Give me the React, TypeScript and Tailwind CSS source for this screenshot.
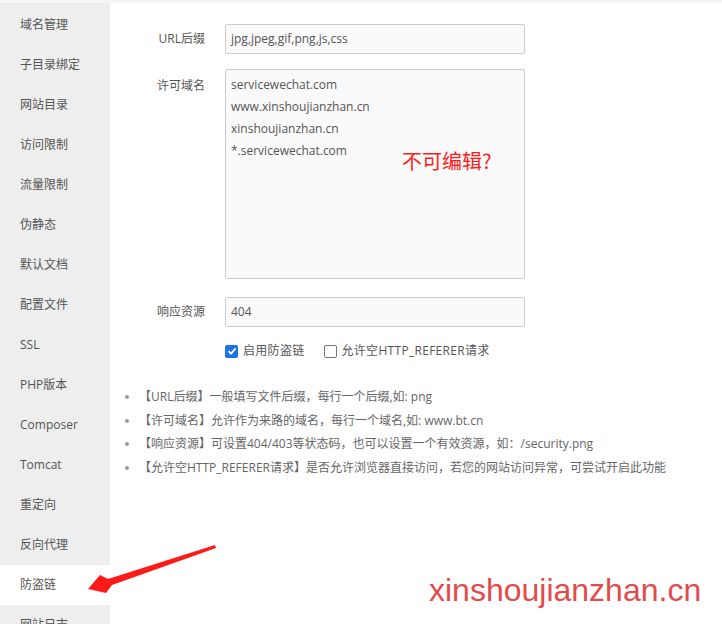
import React from "react";

const menu = [
  "域名管理",
  "子目录绑定",
  "网站目录",
  "访问限制",
  "流量限制",
  "伪静态",
  "默认文档",
  "配置文件",
  "SSL",
  "PHP版本",
  "Composer",
  "Tomcat",
  "重定向",
  "反向代理",
  "防盗链",
  "网站日志",
];

const tips = [
  "【URL后缀】一般填写文件后缀，每行一个后缀,如: png",
  "【许可域名】允许作为来路的域名，每行一个域名,如: www.bt.cn",
  "【响应资源】可设置404/403等状态码，也可以设置一个有效资源，如：/security.png",
  "【允许空HTTP_REFERER请求】是否允许浏览器直接访问，若您的网站访问异常，可尝试开启此功能",
];

const font = { fontFamily: '"Open Sans", "Noto Sans CJK SC", sans-serif' };

export default function App() {
  return (
    <div
      className="relative w-[722px] h-[624px] overflow-hidden bg-white text-[#555]"
      style={font}
    >
      <div className="h-[3px] bg-[#f5f5f5]" />
      <div className="flex h-[621px]">
        <div className="w-[110px] shrink-0 bg-[#eeeeee] pt-[2px]">
          {menu.map((m) => (
            <div
              key={m}
              className={`h-[40px] flex items-center pl-[20px] text-[12px] text-[#555] ${
                m === "防盗链" ? "bg-white" : ""
              }`}
            >
              {m}
            </div>
          ))}
        </div>
        <div className="flex-1 pt-[21px]">
          <div className="flex items-center">
            <div className="w-[95px] text-right text-[12px] mr-[20px]">URL后缀</div>
            <div className="w-[300px] h-[30px] border border-[#cccccc] rounded-[2px] bg-[#fafafa] flex items-center px-[5px] text-[12px]">
              jpg,jpeg,gif,png,js,css
            </div>
          </div>
          <div className="flex items-start mt-[15px]">
            <div className="w-[95px] text-right text-[12px] mr-[20px] mt-[6px] leading-[22px]">
              许可域名
            </div>
            <div className="w-[300px] h-[210px] border border-[#cccccc] rounded-[2px] bg-[#fafafa] px-[5px] pt-[4px] text-[12px] leading-[22px]">
              <div>servicewechat.com</div>
              <div>www.xinshoujianzhan.cn</div>
              <div>xinshoujianzhan.cn</div>
              <div>*.servicewechat.com</div>
            </div>
          </div>
          <div className="flex items-center mt-[18px]">
            <div className="w-[95px] text-right text-[12px] mr-[20px]">响应资源</div>
            <div className="w-[300px] h-[30px] border border-[#cccccc] rounded-[2px] bg-[#fafafa] flex items-center px-[5px] text-[12px]">
              404
            </div>
          </div>
          <div className="flex items-center mt-[14px] ml-[115px] h-[20px] text-[12px]">
            <span className="w-[13px] h-[13px] rounded-[2px] bg-[#1a73e8] flex items-center justify-center">
              <svg width="10" height="10" viewBox="0 0 10 10">
                <path d="M1.5 5.2 L4 7.6 L8.6 2.4" fill="none" stroke="white" strokeWidth="1.8" />
              </svg>
            </span>
            <span className="ml-[5px] tracking-[0.3px]">启用防盗链</span>
            <span className="ml-[19px] w-[13px] h-[13px] rounded-[2px] border border-[#767676] bg-white" />
            <span className="ml-[5px] tracking-[0.3px]">允许空HTTP_REFERER请求</span>
          </div>
          <ul className="mt-[24px] text-[12px] text-[#666] leading-[23.7px]">
            {tips.map((t) => (
              <li key={t} className="flex items-center">
                <span className="ml-[15px] w-[4px] h-[4px] rounded-full bg-[#999]" />
                <span className="ml-[10px]">{t}</span>
              </li>
            ))}
          </ul>
        </div>
      </div>

      <div
        className="absolute left-[402px] top-[147px] text-[20px] leading-[28px] text-[#ff1a1a]"
        style={{ fontFamily: '"Noto Sans CJK SC", sans-serif' }}
      >
        不可编辑?
      </div>

      <div
        className="absolute left-[429px] top-[570px] text-[32px] leading-[40px] text-[#e34a4a]"
        style={{ fontFamily: '"Liberation Sans", Arial, sans-serif' }}
      >
        xinshoujianzhan.cn
      </div>

      <svg className="absolute left-0 top-0" width="722" height="624" viewBox="0 0 722 624">
        <polygon
          points="88,589 100,575 108,579 215,545 216,548 112,585 106,593"
          fill="#ff1a1a"
        />
      </svg>
    </div>
  );
}
